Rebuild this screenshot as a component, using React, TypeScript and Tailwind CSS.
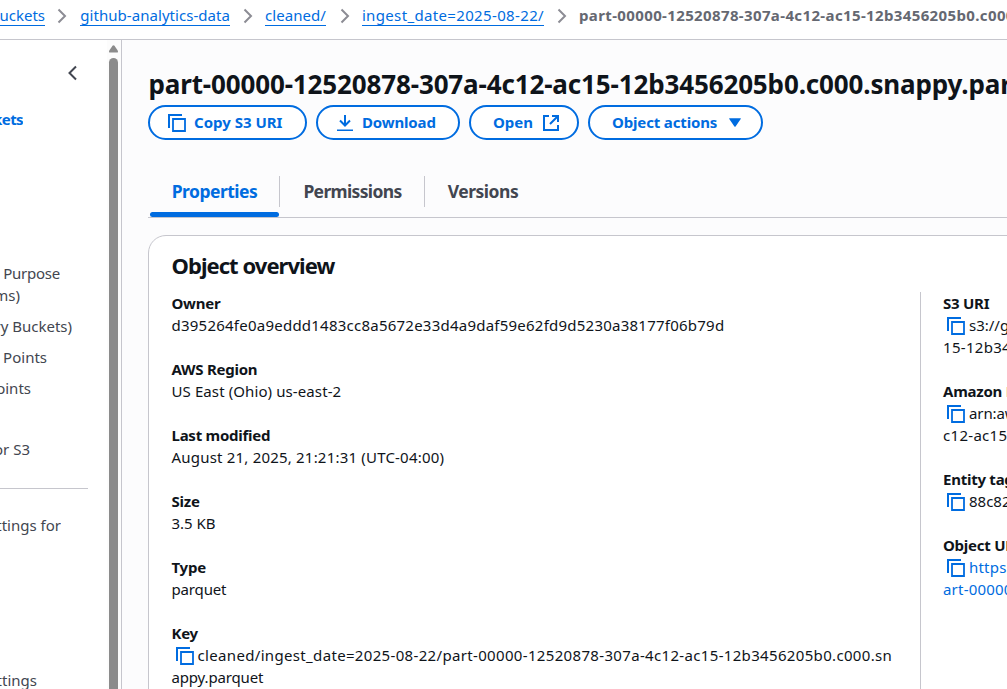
import type { ReactNode } from "react";

function CopyIcon({ className = "" }: { className?: string }) {
  return (
    <svg className={`h-[18px] w-[18px] shrink-0 ${className}`} viewBox="0 0 18 18" fill="none" stroke="#006ce0">
      <path d="M1 14V1h13" strokeWidth="2" />
      <path d="M5 5h12v12H5z" strokeWidth="1.8" />
    </svg>
  );
}

function Separator() {
  return (
    <svg className="h-4 w-[10px] shrink-0" viewBox="0 0 10 16" fill="none" stroke="#8c8c94" strokeWidth="2">
      <path d="M1.5 1.5 8 8l-6.5 6.5" />
    </svg>
  );
}

function Crumb({ className, children }: { className: string; children: ReactNode }) {
  return (
    <a className={`flex h-[22px] shrink-0 justify-end border-b border-[#006ce0] leading-[22px] text-[#006ce0] ${className}`}>
      {children}
    </a>
  );
}

function PillButton({ className, children }: { className: string; children: ReactNode }) {
  return (
    <button
      className={`flex h-[35px] items-center rounded-full border-2 border-[#006ce0] bg-white font-bold text-[#006ce0] ${className}`}
    >
      {children}
    </button>
  );
}

function Field({ label, className = "", children }: { label: string; className?: string; children: ReactNode }) {
  return (
    <div className="mb-[22px] whitespace-nowrap leading-[22px]">
      <div className="font-bold tracking-[-0.25px]">{label}</div>
      <div className={className}>{children}</div>
    </div>
  );
}

function CopyLine({ children }: { children: ReactNode }) {
  return (
    <div className="flex h-[22px] items-center pl-1">
      <CopyIcon className="mt-[2px] mr-1" />
      <span>{children}</span>
    </div>
  );
}

function NavLine({ className, children }: { className: string; children: ReactNode }) {
  return (
    <div className={`flex h-[22px] shrink-0 justify-end overflow-hidden whitespace-nowrap leading-[22px] ${className}`}>
      {children}
    </div>
  );
}

export default function App() {
  return (
    <div className="flex h-[689px] w-[1007px] flex-col overflow-hidden bg-white font-['Noto_Sans',sans-serif] text-[15px] text-[#0f141a]">
      <header className="flex h-10 shrink-0 items-start overflow-hidden whitespace-nowrap border-b border-[#c6c6cd] pt-1">
        <Crumb className="mr-[12px] w-[45px]">uckets</Crumb>
        <div className="mt-1 mr-[13px] flex"><Separator /></div>
        <Crumb className="mr-[13px] w-[150px] tracking-[0.05px]">github-analytics-data</Crumb>
        <div className="mt-1 mr-[12px] flex"><Separator /></div>
        <Crumb className="mr-[14px] w-[61px] tracking-[0.07px]">cleaned/</Crumb>
        <div className="mt-1 mr-3 flex"><Separator /></div>
        <Crumb className="mr-[13px] w-[182px] tracking-[0.35px]">ingest_date=2025-08-22/</Crumb>
        <div className="mt-1 mr-3 flex"><Separator /></div>
        <span className="font-bold leading-[23px] tracking-[0.37px] text-[#656871]">part-00000-12520878-307a-4c12-ac15-12b3456205b0.c000</span>
      </header>

      <div className="flex min-h-0 flex-1">
        <nav className="flex w-[107px] shrink-0 flex-col text-[#424650]">
          <div className="flex h-[68px] shrink-0 justify-end pt-[25px] pr-[29px]">
            <svg className="h-4 w-[11px]" viewBox="0 0 11 16" fill="none" stroke="#424650" strokeWidth="2">
              <path d="M9 1.5 2.5 8 9 14.5" />
            </svg>
          </div>
          <NavLine className="w-[23px] font-bold tracking-[-0.6px] text-[#006ce0]">kets</NavLine>
          <NavLine className="mt-[132px] w-[60px] tracking-[-0.25px]">Purpose</NavLine>
          <NavLine className="w-[20px]">ms)</NavLine>
          <NavLine className="mt-[9px] w-[72px]">ry Buckets)</NavLine>
          <NavLine className="mt-[9px] w-[47px]">Points</NavLine>
          <NavLine className="mt-[9px] w-[31px]">oints</NavLine>
          <NavLine className="mt-[39px] w-[30px]">or S3</NavLine>
          <div className="mt-[28px] w-[88px] shrink-0 border-t border-[#c6c6cd]" />
          <NavLine className="mt-[25px] w-[61px]">ttings for</NavLine>
          <NavLine className="mt-[133px] w-[37px]">ttings</NavLine>
        </nav>

        <div className="flex w-[15px] shrink-0 flex-col items-center border-r border-[#c6c6cd] bg-[#fcfcfc] pt-[5px] pr-px">
          <svg className="h-[8px] w-[9px]" viewBox="0 0 9 8" fill="#8b8b8b">
            <path d="M3.5.8Q4.500-.5 5.500.8L8.700 5.500Q9.500 7.500 8 7.500H1Q-.5 7.500.3 5.500z" />
          </svg>
          <div className="mt-[5px] w-[9px] flex-1 rounded-t-full bg-[#8b8b8b]" />
        </div>

        <main className="flex min-w-0 flex-1 flex-col overflow-hidden bg-[#fcfcfd] pl-[26px]">
          <h1 className="mt-[28px] h-[37px] shrink-0 whitespace-nowrap pl-[0.5px] text-[26px] font-bold leading-[33px] tracking-[-0.14px]">
            part-00000-12520878-307a-4c12-ac15-12b3456205b0.c000.snappy.par
          </h1>
          <div className="flex gap-[9px] whitespace-nowrap">
            <PillButton className="w-[159px] pl-[18px]">
              <CopyIcon className="mr-[8px]" />Copy S3 URI
            </PillButton>
            <PillButton className="w-[144px] pl-[18px] tracking-[-0.15px]">
              <svg className="mr-[8px] h-[18px] w-[18px]" viewBox="0 0 18 18" fill="none" stroke="#006ce0" strokeWidth="2">
                <path d="M9 1v10.500M4 6.500 9 11.500 14 6.500" />
                <path d="M1 16.250h16" strokeWidth="1.5" />
              </svg>
              Download
            </PillButton>
            <PillButton className="w-[110px] pl-[22px]">
              <span className="mr-[10px]">Open</span>
              <svg className="h-4 w-4" viewBox="0 0 16 16" fill="none" stroke="#006ce0" strokeWidth="2">
                <path d="M6 1H1v14h14v-5M9 1h6v6M15 1 7 9" />
              </svg>
            </PillButton>
            <PillButton className="w-[175px] pl-[22px] tracking-[-0.15px]">
              <span className="mr-[12px]">Object actions</span>
              <svg className="h-[9px] w-[12px]" viewBox="0 0 12 9" fill="#006ce0">
                <path d="M.6.300h10.800q.8 0 .3.700L6.600 8.500q-.6.700-1.200 0L.3 1Q-.2.300.6.300z" />
              </svg>
            </PillButton>
          </div>

          <div className="mt-[29px] flex h-[49px] shrink-0 border-b border-[#c6c6cd] pl-0.5 text-[17.500px] font-bold tracking-[-0.5px] text-[#424650]">
            <div className="flex w-[130px] flex-col text-[#006ce0]">
              <div className="mt-[7px] flex h-[31px] items-center justify-center border-r border-[#c6c6cd]">Properties</div>
              <div className="mt-[5px] mr-px h-[5px] rounded-full bg-[#006ce0]" />
            </div>
            <div className="mt-[7px] flex h-[31px] w-[145px] items-center justify-center border-r border-[#c6c6cd] pl-px tracking-[-0.65px]">Permissions</div>
            <div className="mt-[7px] flex h-[31px] w-[116px] items-center justify-center">Versions</div>
          </div>

          <section className="mt-[17px] flex h-[500px] w-[1100px] shrink-0 flex-col rounded-[18px] border border-[#c6c6cd] bg-white pl-[22.5px]">
            <h2 className="mt-[14px] h-[42px] text-[22px] font-bold leading-[31px] tracking-[-0.95px]">Object overview</h2>
            <div className="flex">
              <div className="w-[749.5px] shrink-0 border-r border-[#c6c6cd]">
                <Field label="Owner" className="tracking-[0.235px]">d395264fe0a9eddd1483cc8a5672e33d4a9daf59e62fd9d5230a38177f06b79d</Field>
                <Field label="AWS Region" className="tracking-[0.1px]">US East (Ohio) us-east-2</Field>
                <Field label="Last modified" className="tracking-[0.2px]">August 21, 2025, 21:21:31 (UTC-04:00)</Field>
                <Field label="Size">3.5 KB</Field>
                <Field label="Type" className="tracking-[-0.15px]">parquet</Field>
                <Field label="Key">
                  <div className="tracking-[0.335px]">
                    <CopyLine>cleaned/ingest_date=2025-08-22/part-00000-12520878-307a-4c12-ac15-12b3456205b0.c000.sn</CopyLine>
                  </div>
                  <div className="tracking-[-0.15px]">appy.parquet</div>
                </Field>
              </div>
              <div className="pl-[22px]">
                <Field label="S3 URI">
                  <CopyLine>s3://github</CopyLine>
                  <span className="tracking-[0.3px]">15-12b3456</span>
                </Field>
                <Field label="Amazon Resource">
                  <CopyLine><span className="tracking-[-0.1px]">arn:aws:s3</span></CopyLine>
                  <span className="tracking-[0.3px]">c12-ac15-12</span>
                </Field>
                <Field label="Entity tag (Etag)">
                  <CopyLine>88c82</CopyLine>
                </Field>
                <Field label="Object URL" className="tracking-[0.2px]">
                  <CopyLine><span className="text-[#006ce0]">https://</span></CopyLine>
                  <span className="text-[#006ce0]">art-00000-1</span>
                </Field>
              </div>
            </div>
          </section>
        </main>
      </div>
    </div>
  );
}
